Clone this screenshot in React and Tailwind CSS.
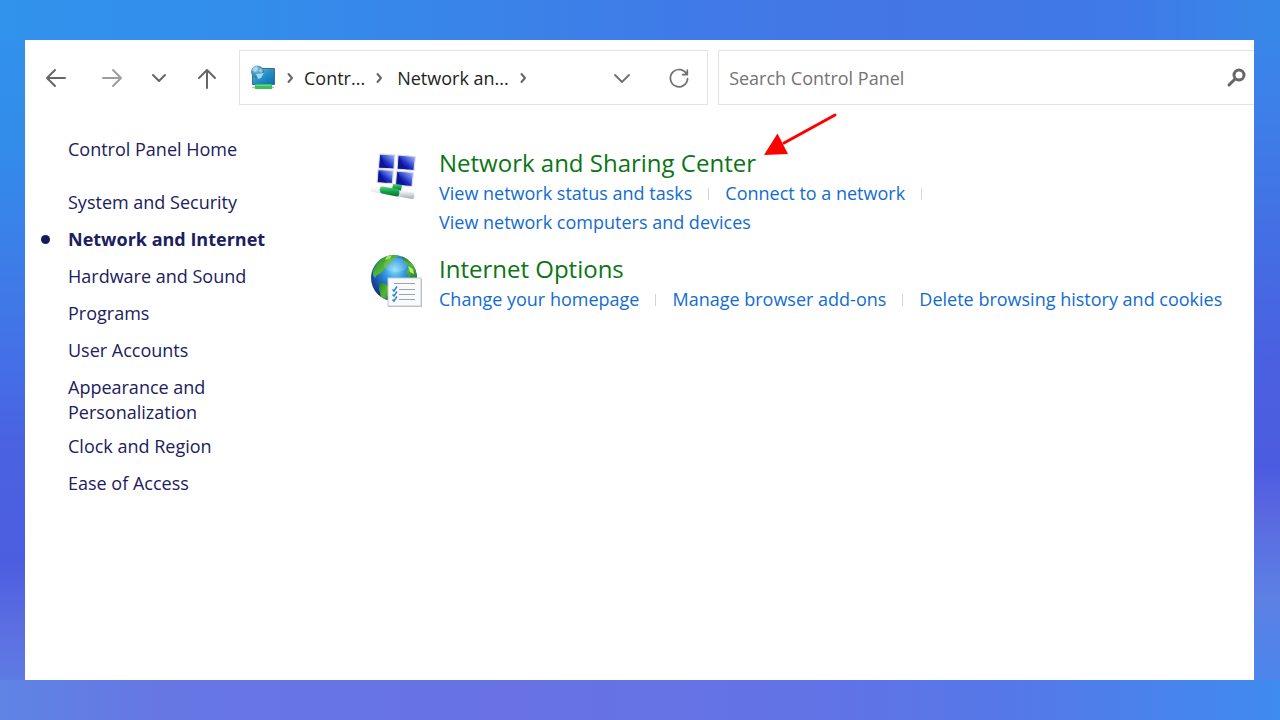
import React, { useState } from 'react';

const CATEGORIES = [
    'System and Security',
    'Network and Internet',
    'Hardware and Sound',
    'Programs',
    'User Accounts',
    'Appearance and Personalization',
    'Clock and Region',
    'Ease of Access',
];

const SECTIONS = [
    {
        title: 'Network and Sharing Center',
        icon: NetworkIcon,
        links: ['View network status and tasks', 'Connect to a network', 'View network computers and devices'],
        highlighted: true,
    },
    {
        title: 'Internet Options',
        icon: InternetIcon,
        links: ['Change your homepage', 'Manage browser add-ons', 'Delete browsing history and cookies'],
    },
];

function Stroke({ d, size = 24, width = 2, className = '' }) {
    return (
        <svg width={size} height={size} viewBox={`0 0 ${size} ${size}`} fill="none" stroke="currentColor" strokeWidth={width} strokeLinecap="round" strokeLinejoin="round" className={`shrink-0 ${className}`} aria-hidden="true">
            <path d={d} />
        </svg>
    );
}

function Crumb() {
    return <Stroke size={12} d="M4.500 2L8 6L4.500 10" className="text-[#666666]" />;
}

function LocationIcon() {
    return (
        <svg width="26" height="26" viewBox="0 0 26 26" className="shrink-0" aria-hidden="true">
            <defs>
                <linearGradient id="locScreen" x1="0" y1="0" x2="1" y2="1">
                    <stop offset="0" stopColor="#5cc3e6" />
                    <stop offset="0.5" stopColor="#2590c8" />
                    <stop offset="1" stopColor="#0f6eb0" />
                </linearGradient>
                <radialGradient id="locGlobe" cx="0.4" cy="0.3" r="0.7">
                    <stop offset="0" stopColor="#9dcfe6" />
                    <stop offset="0.5" stopColor="#4e9cc4" />
                    <stop offset="1" stopColor="#2b739f" />
                </radialGradient>
            </defs>
            <rect x="2" y="3" width="23" height="17" rx="1" fill="#3d6f8c" />
            <rect x="3" y="4" width="21" height="15" fill="url(#locScreen)" />
            <path d="M2 22.500H24" stroke="#b5bcc0" strokeWidth="1.500" />
            <rect x="5" y="19" width="17" height="5" fill="#3fc060" />
            <path d="M6 20.500H21" stroke="#6bd884" />
            <circle cx="7.500" cy="7" r="6.500" fill="url(#locGlobe)" />
            <path d="M3 3L7 1L8 4L5 7L2 5.500ZM10 3L13 5L12 8L9 7Z" fill="#d8f1f8" opacity="0.5" />
            <path d="M6 9L14 8L11 13L8 14Z" fill="#9edaf0" />
        </svg>
    );
}

function NetworkIcon() {
    return (
        <svg width="52" height="56" viewBox="0 -4 52 56" aria-hidden="true">
            <defs>
                <linearGradient id="pane" x1="0" y1="1" x2="1" y2="0">
                    <stop offset="0" stopColor="#1216a6" />
                    <stop offset="0.45" stopColor="#1c28bd" />
                    <stop offset="0.6" stopColor="#4259d8" />
                    <stop offset="1" stopColor="#b5c8fa" />
                </linearGradient>
                <linearGradient id="pipe" x1="0" y1="0" x2="0" y2="1">
                    <stop offset="0" stopColor="#ffffff" />
                    <stop offset="0.5" stopColor="#e6eaed" />
                    <stop offset="1" stopColor="#a3adb2" />
                </linearGradient>
                <linearGradient id="plug" x1="0" y1="0" x2="0" y2="1">
                    <stop offset="0" stopColor="#4fd67c" />
                    <stop offset="0.5" stopColor="#16a348" />
                    <stop offset="1" stopColor="#08702d" />
                </linearGradient>
            </defs>
            <g stroke="#dce1ec" strokeWidth="1.200">
                <path d="M9.500 2L25 3L24 17L8.500 16Z" fill="url(#pane)" />
                <path d="M28 3L45.500 4.500L44 18.500L27 17Z" fill="url(#pane)" />
                <path d="M8 17.500L23.500 18.500L22.500 31.500L7 30.500Z" fill="url(#pane)" />
                <path d="M26.500 19L43.500 20.500L42 34.500L25.500 33Z" fill="url(#pane)" />
            </g>
            <path d="M9.500 15.500L10.500 3L14 11L19 16ZM28 16.500L29 4L33 12L39 17.500Z" fill="#0d0f88" opacity="0.7" />
            <path d="M8 30L9 18.500L13 26L18 31ZM26.500 32L27.500 20L32 28L37 33.500Z" fill="#0d0f88" opacity="0.7" />
            <path d="M23 32L32 33L31 39L22 38Z" fill="url(#plug)" />
            <path d="M2 34L43 40.500C45 41 45 47.500 42 47L2 40C0 39 0 34 2 34Z" fill="url(#pipe)" />
            <path d="M12 34.500L28 37C30 37.500 30 44.500 27 44.500L12 41.500C9 41 9 34.500 12 34.500Z" fill="url(#plug)" />
        </svg>
    );
}

function InternetIcon() {
    return (
        <svg width="52" height="54" viewBox="0 0 52 54" aria-hidden="true">
            <defs>
                <radialGradient id="ocean" cx="0.52" cy="0.32" r="0.65">
                    <stop offset="0" stopColor="#8be0fa" />
                    <stop offset="0.35" stopColor="#3199e2" />
                    <stop offset="0.7" stopColor="#1c55b5" />
                    <stop offset="1" stopColor="#152d7c" />
                </radialGradient>
                <linearGradient id="land" x1="0" y1="0" x2="1" y2="1">
                    <stop offset="0" stopColor="#237d2c" />
                    <stop offset="0.5" stopColor="#55b833" />
                    <stop offset="1" stopColor="#237b30" />
                </linearGradient>
                <clipPath id="globeClip">
                    <circle cx="24" cy="24" r="23" />
                </clipPath>
            </defs>
            <circle cx="24" cy="24" r="23" fill="url(#ocean)" />
            <g clipPath="url(#globeClip)" fill="url(#land)">
                <path d="M5 13L10 5L19 1L29 1L25 5L21 5L22 8L18 11L14 16L11 19L7 21L5 24L3 21L3 17Z" />
                <path d="M9 29L14 29L18 32L20 37L17 43L16 49L11 43L9 35Z" />
                <path d="M32 2L38 3L45 13L47 22L44 25L41 21L39 24L36 18L39 13L36 9L33 7Z" />
                <path d="M17 2L22 1L20 5L15 6Z" fill="#a4df58" />
                <path d="M38 12L43 15L44 20L40 18Z" fill="#c0ed69" />
            </g>
            <ellipse cx="26" cy="11" rx="12" ry="7" fill="#ffffff" opacity="0.15" />
            <rect x="18" y="25" width="34" height="28" fill="#b7bbc0" />
            <rect x="18" y="24" width="33" height="28" fill="#f9fafc" stroke="#c5c9ce" />
            <path d="M24 29.500H45M29 35.500H45M29 40.500H45M29 45.500H45" stroke="#9aa6b3" strokeWidth="1.200" />
            <path d="M22.500 35.500L24 37L27 32.500M22.500 40.500L24 42L27 37.500M22.500 45.500L24 47L27 42.500" stroke="#2c86cf" strokeWidth="1.500" fill="none" />
        </svg>
    );
}

function PointerArrow() {
    return (
        <svg width="74" height="44" viewBox="0 0 74 44" className="absolute left-full bottom-6 ml-2" aria-hidden="true">
            <path d="M71 4L20 32" stroke="#ff0000" strokeWidth="3" strokeLinecap="round" />
            <path d="M0 44L13.500 22.500L24 43Z" fill="#ff0000" />
        </svg>
    );
}

function Toolbar() {
    const [query, setQuery] = useState('');

    return (
        <header className="flex h-[65px] pt-2.5">
            <nav className="flex w-[214px] shrink-0 items-center justify-between pl-[19px] pr-5 text-[#666666]" aria-label="History">
                <button type="button" aria-label="Back">
                    <Stroke d="M21 12H3M11 4L3 12L11 20" />
                </button>
                <button type="button" aria-label="Forward" className="ml-2 text-[#9d9d9d]">
                    <Stroke d="M3 12H21M13 4L21 12L13 20" />
                </button>
                <button type="button" aria-label="Recent locations">
                    <Stroke d="M6 9L12 15L18 9" />
                </button>
                <button type="button" aria-label="Up">
                    <Stroke d="M12 22V4M4 12L12 4L20 12" />
                </button>
            </nav>

            {/* Address bar */}
            <div className="mr-2.5 flex min-w-0 flex-[46_1_0%] items-center border border-[#e3e3e3] pl-2.5 pr-4 text-lg text-[#222222]">
                <LocationIcon />
                <div className="ml-2 flex items-center gap-2 whitespace-nowrap">
                    <Crumb />
                    <a href="#control-panel">Contr...</a>
                    <Crumb />
                    <a href="#network" className="ml-1">Network an...</a>
                    <Crumb />
                </div>
                <div className="ml-auto flex items-center gap-[33px] text-[#707070]">
                    <button type="button" aria-label="Previous locations">
                        <Stroke width={1.8} d="M5 9L12 16L19 9" />
                    </button>
                    <button type="button" aria-label="Refresh">
                        <Stroke width={1.7} d="M19.800 8.500A8.600 8.600 0 1 0 20.600 12.500M20.300 4V8.700H15.600" />
                    </button>
                </div>
            </div>

            <label className="flex min-w-0 flex-[54_1_0%] items-center border-y border-l border-[#e3e3e3] pl-2.5 pr-[7px]">
                <input
                    type="text"
                    aria-label="Search Control Panel"
                    placeholder="Search Control Panel"
                    value={query}
                    onChange={(e) => setQuery(e.target.value)}
                    className="min-w-0 flex-1 text-lg placeholder-[#737373] outline-none"
                />
                <svg width="22" height="22" viewBox="0 0 22 22" fill="none" stroke="#666666" aria-hidden="true">
                    <circle cx="14" cy="8" r="5" strokeWidth="3" />
                    <path d="M10 12L4 18" strokeWidth="3" strokeLinecap="round" />
                </svg>
            </label>
        </header>
    );
}

function SidebarLink({ label, active }) {
    return (
        <div className="flex min-h-[37px] pt-1.5 pb-[3px]">
            <span className="w-[43px] shrink-0 pl-4 pt-2">
                {active && <span className="block size-[9px] rounded-full bg-[#141a5c]" />}
            </span>
            <a href="#category" aria-current={active ? 'page' : undefined} className={active ? 'whitespace-nowrap font-bold' : ''}>
                {label}
            </a>
        </div>
    );
}

function Section({ title, icon: Icon, links, highlighted }) {
    return (
        <section className="flex gap-[17px]">
            <div className="w-[52px] shrink-0 pt-px">
                <Icon />
            </div>
            <div className="min-w-0 flex-1">
                <h2 className="relative inline-block align-top text-2xl leading-8 text-[#0b7517]">
                    <a href="#section">{title}</a>
                    {highlighted && <PointerArrow />}
                </h2>
                <ul className="flex flex-wrap gap-x-4 text-[#126cd0]">
                    {links.map((link, i) => (
                        <li key={link} className="flex items-center gap-4 leading-[29px]">
                            <a href="#task">{link}</a>
                            {i < links.length - 1 && <span className="h-3 w-px bg-[#d4d4d4]" />}
                        </li>
                    ))}
                </ul>
            </div>
        </section>
    );
}

export default function App() {
    return (
        <div className="flex min-h-screen bg-[linear-gradient(90deg,#3193ec,#338deb_20%,#3a82e8_40%,#407ae8_55%,#4376e4_70%,#3f7ae8_88%,#3688e8),linear-gradient(90deg,#5e84e4,#6677e4_12%,#6872e3_40%,#6173e6_65%,#5479e8_80%,#3f8bf0),linear-gradient(180deg,#3193ec,#328cea_20%,#3f7ae8_40%,#4370e6_50%,#4a62e0_62%,#4c5ee0_78%,#5c6ee2_87%,#5f84e4),linear-gradient(180deg,#3689e9,#3d80e8_15%,#4370e4_32%,#4a60e0_50%,#4c5ce0_65%,#5a68e0_71%,#5c80e4_83%,#4488f0)] bg-[size:100%_40px,100%_40px,50%_100%,50%_100%] bg-[position:top,bottom,left,right] bg-no-repeat py-10 pl-[25px] pr-[26px] font-['Open_Sans','Noto_Sans',sans-serif]">
            <div className="min-w-0 flex-1 bg-white">
                <Toolbar />
                <div className="flex text-lg leading-[25px]">
                    <aside className="w-[345px] shrink-0 pt-[26px] pr-[100px] text-[#1b2060]">
                        <SidebarLink label="Control Panel Home" />
                        <nav className="mt-4" aria-label="Categories">
                            {CATEGORIES.map((label) => (
                                <SidebarLink key={label} label={label} active={label === 'Network and Internet'} />
                            ))}
                        </nav>
                    </aside>
                    <main className="flex min-w-0 flex-1 flex-col gap-4 pt-[42px] pr-2">
                        {SECTIONS.map((section) => (
                            <Section key={section.title} {...section} />
                        ))}
                    </main>
                </div>
            </div>
        </div>
    );
}
